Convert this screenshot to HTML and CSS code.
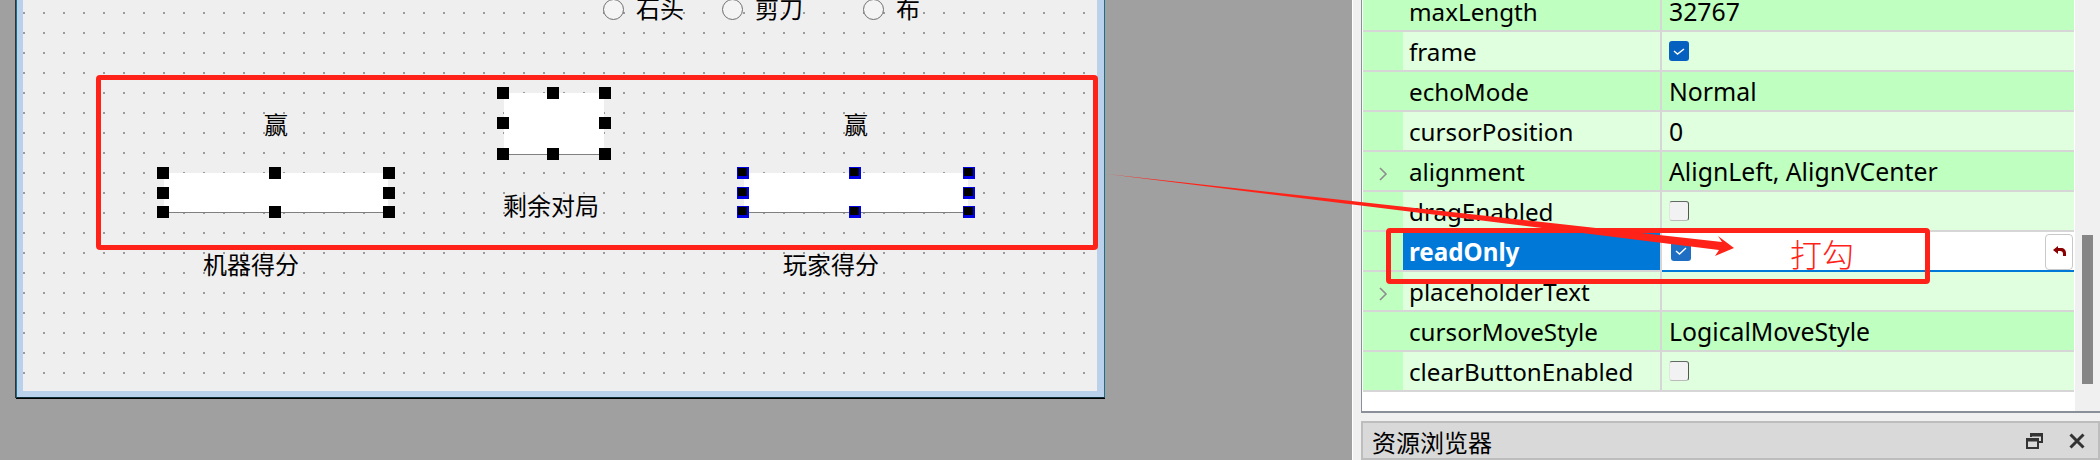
FILE: index.html
```html
<!DOCTYPE html>
<html lang="zh-CN">
<head>
    <meta charset="UTF-8">
    <title>Qt Designer</title>
    <link rel="stylesheet" href="styles.css">
</head>
<body>

    <div class="workspace">
        <!-- The form being edited, its widgets sit on a free canvas -->
        <div class="form-window">
            <div class="form-canvas">
                <span class="radio radio-rock"></span><span class="cn-label label-rock">石头</span>
                <span class="radio radio-scissors"></span><span class="cn-label label-scissors">剪刀</span>
                <span class="radio radio-cloth"></span><span class="cn-label label-cloth">布</span>

                <span class="cn-label label-win-left">赢</span>
                <span class="cn-label label-win-right">赢</span>
                <span class="cn-label label-left-score">机器得分</span>
                <span class="cn-label label-remain">剩余对局</span>
                <span class="cn-label label-right-score">玩家得分</span>

                <div class="line-edit edit-left">
                    <i class="handle h-tl"></i><i class="handle h-tc"></i><i class="handle h-tr"></i>
                    <i class="handle h-ml"></i><i class="handle h-mr"></i>
                    <i class="handle h-bl"></i><i class="handle h-bc"></i><i class="handle h-br"></i>
                </div>
                <div class="line-edit edit-center">
                    <i class="handle h-tl"></i><i class="handle h-tc"></i><i class="handle h-tr"></i>
                    <i class="handle h-ml"></i><i class="handle h-mr"></i>
                    <i class="handle h-bl"></i><i class="handle h-bc"></i><i class="handle h-br"></i>
                </div>
                <div class="line-edit edit-right primary">
                    <i class="handle h-tl"></i><i class="handle h-tc"></i><i class="handle h-tr"></i>
                    <i class="handle h-ml"></i><i class="handle h-mr"></i>
                    <i class="handle h-bl"></i><i class="handle h-bc"></i><i class="handle h-br"></i>
                </div>
            </div>
        </div>
    </div>

    <div class="side-dock">
        <div class="property-panel">
            <div class="property-list">
                <div class="row strong"><span class="arrow-cell"></span><span class="name">maxLength</span><span class="value">32767</span></div>
                <div class="row"><span class="arrow-cell"></span><span class="name">frame</span><span class="value"><i class="check on"><svg viewBox="0 0 20 20"><path d="M5 10l3.500 3 6.500-5" /></svg></i></span></div>
                <div class="row strong"><span class="arrow-cell"></span><span class="name">echoMode</span><span class="value">Normal</span></div>
                <div class="row"><span class="arrow-cell"></span><span class="name">cursorPosition</span><span class="value">0</span></div>
                <div class="row strong"><span class="arrow-cell"><svg class="chevron" viewBox="0 0 10 14"><path d="M2 1l6 6-6 6" /></svg></span><span class="name">alignment</span><span class="value">AlignLeft, AlignVCenter</span></div>
                <div class="row"><span class="arrow-cell"></span><span class="name">dragEnabled</span><span class="value"><i class="check"></i></span></div>
                <div class="row selected"><span class="arrow-cell"></span><span class="name">readOnly</span><span class="value"><i class="check on"><svg viewBox="0 0 20 20"><path d="M5 10l3.500 3 6.500-6" /></svg></i>
                    <button class="revert"><svg viewBox="0 0 13 12"><path d="M0 4l5-4v2h3c3 0 5 2 5 5v3h-3V8c0-2-1-3-3-3H5v3z" /></svg></button></span></div>
                <div class="row"><span class="arrow-cell"><svg class="chevron" viewBox="0 0 10 14"><path d="M2 1l6 6-6 6" /></svg></span><span class="name">placeholderText</span><span class="value"></span></div>
                <div class="row strong"><span class="arrow-cell"></span><span class="name">cursorMoveStyle</span><span class="value">LogicalMoveStyle</span></div>
                <div class="row"><span class="arrow-cell"></span><span class="name">clearButtonEnabled</span><span class="value"><i class="check"></i></span></div>
            </div>
            <div class="scroll-track"><div class="scroll-thumb"></div></div>
        </div>
        <div class="dock-title">
            <span class="dock-name">资源浏览器</span>
            <svg class="dock-icon" viewBox="0 0 17 17"><path d="M5 5V2h11v8h-4M5 3.500h11M1 7h11v9H1zM1 8.500h11" /></svg>
            <svg class="dock-icon close" viewBox="0 0 16 16"><path d="M1.500 1.500l13 13M14.500 1.500l-13 13" /></svg>
        </div>
    </div>

    <!-- Red annotations drawn on top of the screenshot -->
    <div class="note-box note-form"></div>
    <div class="note-box note-row"></div>
    <svg class="note-arrow" viewBox="0 0 2100 460"><polygon points="1107,174 1722,242 1718,236 1734,248 1715,256 1719,250" /></svg>
    <span class="note-text">打勾</span>

</body>
</html>
```

FILE: styles.css
```css
:root {
    --workspace: #a0a0a0;
    --panel: #f0f0f0;
    --green-strong: #bfffbf;
    --green-light: #dfffdf;
    --grid-line: #d6d6d6;
    --select: #0078d7;
    --note-red: #ff2218;
    --cn-font: "Noto Sans CJK SC", sans-serif;
}

html, body {
    margin: 0;
    height: 460px;
    overflow: hidden;
}

body {
    position: relative;
    display: flex;
    background: var(--workspace);
    font-family: "Noto Sans", "Open Sans", sans-serif;
    color: #000;
}

/* Left area with the form window */
.workspace {
    width: 1352px;
    flex: none;
    padding-left: 16px;
    box-sizing: border-box;
}

.form-window {
    width: 1089px;
    height: 398px;
    box-sizing: border-box;
    padding: 0 6px 6px 6px;
    background: #b9d1ea;
    border: 1px solid #1d6f88;
    border-top: none;
    border-bottom: 1px solid #0c2f3a;
    box-shadow: 0 1px 0 #000, -1px 0 0 #333;
}

/* Designer grid: one 2px dot every 20px */
.form-canvas {
    position: relative;
    width: 1074px;
    height: 391px;
    background-color: #efefef;
    background-image: conic-gradient(from 0deg at 2px 2px, transparent 75%, #9c9c9c 0);
    background-size: 20px 20px;
    background-position: 0 12px;
    overflow: hidden;
}

/* Widgets of the form */
.radio {
    position: absolute;
    top: -1px;
    width: 19px;
    height: 19px;
    border: 1px solid #6e6e6e;
    border-radius: 50%;
    background: #f4f4f4;
}

.radio-rock { left: 580px; }
.radio-scissors { left: 699px; }
.radio-cloth { left: 840px; }

.cn-label {
    position: absolute;
    font-family: var(--cn-font);
    font-size: 24px;
    line-height: 24px;
    font-weight: 400;
    color: #000;
    white-space: nowrap;
}

.label-rock { left: 613px; top: -4px; }
.label-scissors { left: 732px; top: -4px; }
.label-cloth { left: 873px; top: -4px; }
.label-win-left { left: 241px; top: 112px; }
.label-win-right { left: 821px; top: 112px; }
.label-left-score { left: 180px; top: 252px; }
.label-remain { left: 480px; top: 193px; }
.label-right-score { left: 760px; top: 252px; }

.line-edit {
    position: absolute;
    box-sizing: border-box;
    background: #fff;
    border-bottom: 1px solid #808080;
}

.edit-left { left: 141px; top: 173px; width: 224px; height: 40px; }
.edit-center { left: 481px; top: 93px; width: 100px; height: 62px; }
.edit-right { left: 721px; top: 173px; width: 224px; height: 40px; }

/* Selection handles */
.handle {
    position: absolute;
    width: 12px;
    height: 12px;
    background: #000;
    box-sizing: border-box;
}

.primary .handle {
    border: solid #0000e6;
    border-width: 1px 2px 3px 1px;
}

.h-tl, .h-tc, .h-tr { top: -6px; }
.h-ml, .h-mr { top: calc(50% - 6px); }
.h-bl, .h-bc, .h-br { bottom: -6px; }
.h-tl, .h-ml, .h-bl { left: -7px; }
.h-tc, .h-bc { left: calc(50% - 7px); }
.h-tr, .h-mr, .h-br { right: -7px; }

.edit-center .h-ml, .edit-center .h-mr { top: calc(50% - 7px); }

/* Right dock */
.side-dock {
    width: 748px;
    height: 460px;
    flex: none;
    box-sizing: border-box;
    border-left: 1px solid #fff;
    background: var(--panel);
    padding-left: 8px;
    display: flex;
    flex-direction: column;
}

.property-panel {
    display: flex;
    height: 413px;
    box-sizing: border-box;
    border-left: 1px solid #8a8f99;
    border-bottom: 2px solid #8a8f99;
    background: #fff;
    overflow: hidden;
    flex: none;
}

.property-list {
    width: 711px;
    flex: none;
    margin-top: -8px;
    padding-left: 1px;
}

.row {
    display: grid;
    grid-template-columns: 40px 259px 1fr;
    height: 40px;
    box-sizing: border-box;
    background: var(--green-light);
    font-size: 24.8px;
    line-height: 40px;
}

.row > span {
    display: block;
    border-bottom: 2px solid var(--grid-line);
    box-sizing: border-box;
    height: 40px;
}

.row.strong { background: var(--green-strong); }

.arrow-cell {
    background: var(--green-strong);
    display: flex !important;
    align-items: center;
    padding: 6px 0 0 15px;
}

.chevron {
    width: 10px;
    height: 14px;
    fill: none;
    stroke: #8d8d8d;
    stroke-width: 1.6;
}

.name {
    padding-left: 6px;
    font-size: 24.2px;
    border-right: 2px solid var(--grid-line);
}

.value {
    position: relative;
    padding-left: 7px;
    display: flex !important;
    align-items: center;
}

.check {
    display: block;
    width: 20px;
    height: 20px;
    box-sizing: border-box;
    background: #f2f2f2;
    border: 1px solid;
    border-color: #666 #555 #bbb #e4e4e4;
    border-radius: 3px;
}

.check.on {
    background: #0560c0;
    border: none;
}

.check svg {
    display: block;
    width: 20px;
    height: 20px;
    fill: none;
    stroke: #fff;
    stroke-width: 1.4;
}

/* Current row of the property list */
.selected .name {
    background: var(--select);
    color: #fff;
    font-weight: 700;
    border-bottom-color: var(--grid-line);
}

.selected .value {
    background: #fff;
    border-bottom: 2px solid var(--select);
    padding-left: 9px;
}

.selected .check.on { background: #1e6fc4; }

.revert {
    position: absolute;
    right: 1px;
    top: 2px;
    width: 28px;
    height: 36px;
    padding: 0;
    box-sizing: border-box;
    background: #fff;
    border: 1px solid #c8c8c8;
    border-radius: 4px;
    display: flex;
    align-items: center;
    justify-content: center;
}

.revert svg {
    width: 13px;
    height: 12px;
    fill: #8b0000;
}

.scroll-track {
    flex: 1;
    margin-left: 1px;
    background: var(--panel);
    padding: 235px 8px 0 7px;
}

.scroll-thumb {
    width: 11px;
    height: 149px;
    background: #868686;
}

.dock-title {
    margin-top: 8px;
    height: 39px;
    flex: none;
    box-sizing: border-box;
    border: 2px solid #bdbdbd;
    background: #d9d9d9;
    display: flex;
    align-items: center;
    padding: 0 13px 0 9px;
}

.dock-name {
    font-family: var(--cn-font);
    font-size: 24px;
    font-weight: 400;
    line-height: 34px;
    padding-top: 3px;
    flex: 1;
}

.dock-icon {
    width: 17px;
    height: 17px;
    fill: none;
    stroke: #333;
    stroke-width: 2;
}

.dock-icon.close {
    width: 16px;
    height: 16px;
    margin-left: 26px;
    stroke-width: 3;
}

/* Annotations */
.note-box {
    position: absolute;
    box-sizing: border-box;
    border: 5px solid var(--note-red);
    border-radius: 4px;
}

.note-form { left: 96px; top: 75px; width: 1002px; height: 175px; }
.note-row { left: 1386px; top: 228px; width: 544px; height: 56px; }

.note-arrow {
    position: absolute;
    left: 0;
    top: 0;
    width: 2100px;
    height: 460px;
}

.note-arrow polygon { fill: var(--note-red); }

.note-text {
    position: absolute;
    left: 1790px;
    top: 236px;
    font-family: var(--cn-font);
    font-size: 32px;
    line-height: 34px;
    font-weight: 300;
    color: var(--note-red);
}
```
